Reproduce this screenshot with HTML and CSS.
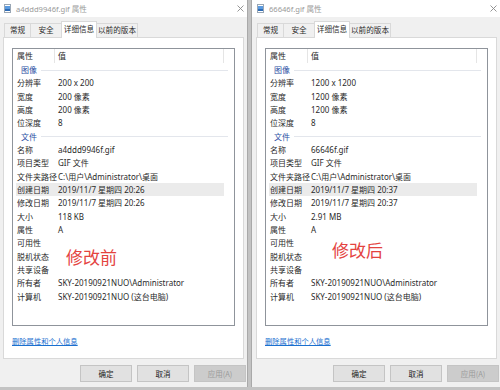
FILE: index.html
```html
<!DOCTYPE html>
<html lang="zh-CN">
<head>
<meta charset="utf-8">
<title>属性</title>
<link rel="stylesheet" href="styles.css">
</head>
<body>
<div class="screen">
  <div class="dialog">
    <div class="titlebar">
      <svg class="file-icon" width="7" height="9" viewBox="0 0 7 9"><rect x="0.5" y="0.5" width="6" height="8" fill="#fff" stroke="#9aa7b5"/><rect x="1" y="2" width="5" height="5" fill="#5b9be0"/><rect x="1" y="5" width="5" height="2" fill="#2d6bb5"/></svg>
      <span class="title">a4ddd9946f.gif 属性</span>
      <svg class="close" width="7" height="7" viewBox="0 0 7 7"><path d="M0.5 0.5L6.5 6.5M6.5 0.5L0.5 6.5" stroke="#8a8a8a" stroke-width="0.9"/></svg>
    </div>
    <div class="tabs">
      <div class="tab t1">常规</div>
      <div class="tab t2">安全</div>
      <div class="tab t3 active">详细信息</div>
      <div class="tab t4">以前的版本</div>
    </div>
    <div class="panel">
      <div class="listbox">
        <div class="lhead"><span class="c1">属性</span><span class="c2">值</span><span class="c3"></span></div>
        <div class="group"><span>图像</span><i></i></div>
        <div class="row"><span class="k">分辨率</span><span class="v">200 x 200</span></div>
        <div class="row"><span class="k">宽度</span><span class="v">200 像素</span></div>
        <div class="row"><span class="k">高度</span><span class="v">200 像素</span></div>
        <div class="row"><span class="k">位深度</span><span class="v">8</span></div>
        <div class="group"><span>文件</span><i></i></div>
        <div class="row"><span class="k">名称</span><span class="v">a4ddd9946f.gif</span></div>
        <div class="row"><span class="k">项目类型</span><span class="v">GIF 文件</span></div>
        <div class="row"><span class="k">文件夹路径</span><span class="v">C:\用户\Administrator\桌面</span></div>
        <div class="row hl"><span class="k">创建日期</span><span class="v">2019/11/7 星期四 20:26</span></div>
        <div class="row"><span class="k">修改日期</span><span class="v">2019/11/7 星期四 20:26</span></div>
        <div class="row"><span class="k">大小</span><span class="v">118 KB</span></div>
        <div class="row"><span class="k">属性</span><span class="v">A</span></div>
        <div class="row"><span class="k">可用性</span><span class="v"></span></div>
        <div class="row"><span class="k">脱机状态</span><span class="v"></span></div>
        <div class="row"><span class="k">共享设备</span><span class="v"></span></div>
        <div class="row"><span class="k">所有者</span><span class="v">SKY-20190921NUO\Administrator</span></div>
        <div class="row"><span class="k">计算机</span><span class="v">SKY-20190921NUO (这台电脑)</span></div>
        <div class="stamp stamp-before">修改前</div>
      </div>
      <a class="link" href="#">删除属性和个人信息</a>
    </div>
    <div class="buttons">
      <button class="btn">确定</button>
      <button class="btn">取消</button>
      <button class="btn" disabled>应用(A)</button>
    </div>
  </div>

  <div class="dialog">
    <div class="titlebar">
      <svg class="file-icon" width="7" height="9" viewBox="0 0 7 9"><rect x="0.5" y="0.5" width="6" height="8" fill="#fff" stroke="#9aa7b5"/><rect x="1" y="2" width="5" height="5" fill="#5b9be0"/><rect x="1" y="5" width="5" height="2" fill="#2d6bb5"/></svg>
      <span class="title">66646f.gif 属性</span>
      <svg class="close" width="7" height="7" viewBox="0 0 7 7"><path d="M0.5 0.5L6.5 6.5M6.5 0.5L0.5 6.5" stroke="#8a8a8a" stroke-width="0.9"/></svg>
    </div>
    <div class="tabs">
      <div class="tab t1">常规</div>
      <div class="tab t2">安全</div>
      <div class="tab t3 active">详细信息</div>
      <div class="tab t4">以前的版本</div>
    </div>
    <div class="panel">
      <div class="listbox">
        <div class="lhead"><span class="c1">属性</span><span class="c2">值</span><span class="c3"></span></div>
        <div class="group"><span>图像</span><i></i></div>
        <div class="row"><span class="k">分辨率</span><span class="v">1200 x 1200</span></div>
        <div class="row"><span class="k">宽度</span><span class="v">1200 像素</span></div>
        <div class="row"><span class="k">高度</span><span class="v">1200 像素</span></div>
        <div class="row"><span class="k">位深度</span><span class="v">8</span></div>
        <div class="group"><span>文件</span><i></i></div>
        <div class="row"><span class="k">名称</span><span class="v">66646f.gif</span></div>
        <div class="row"><span class="k">项目类型</span><span class="v">GIF 文件</span></div>
        <div class="row"><span class="k">文件夹路径</span><span class="v">C:\用户\Administrator\桌面</span></div>
        <div class="row hl"><span class="k">创建日期</span><span class="v">2019/11/7 星期四 20:37</span></div>
        <div class="row"><span class="k">修改日期</span><span class="v">2019/11/7 星期四 20:37</span></div>
        <div class="row"><span class="k">大小</span><span class="v">2.91 MB</span></div>
        <div class="row"><span class="k">属性</span><span class="v">A</span></div>
        <div class="row"><span class="k">可用性</span><span class="v"></span></div>
        <div class="row"><span class="k">脱机状态</span><span class="v"></span></div>
        <div class="row"><span class="k">共享设备</span><span class="v"></span></div>
        <div class="row"><span class="k">所有者</span><span class="v">SKY-20190921NUO\Administrator</span></div>
        <div class="row"><span class="k">计算机</span><span class="v">SKY-20190921NUO (这台电脑)</span></div>
        <div class="stamp stamp-after">修改后</div>
      </div>
      <a class="link" href="#">删除属性和个人信息</a>
    </div>
    <div class="buttons">
      <button class="btn">确定</button>
      <button class="btn">取消</button>
      <button class="btn" disabled>应用(A)</button>
    </div>
  </div>
</div>
</body>
</html>
```

FILE: styles.css
```css
html, body {
  margin: 0;
  padding: 0;
}
body {
  width: 500px;
  height: 390px;
  overflow: hidden;
  background: #c3c3c3;
  font-family: "Noto Sans", "Noto Sans CJK SC", sans-serif;
  color: #2a2a2a;
}
.screen {
  display: flex;
  gap: 3px;
  margin-left: -2px;
}
.dialog {
  flex: none;
  width: 250px;
  height: 387px;
  box-sizing: border-box;
  background: #f0f0f0;
  border-right: 1px solid #a9a9a9;
  border-left: 1px solid #a9a9a9;
  display: flex;
  flex-direction: column;
}
.titlebar {
  height: 17px;
  flex: none;
  background: #fff;
  display: flex;
  align-items: center;
  padding-left: 5px;
}
.file-icon {
  flex: none;
}
.title {
  margin-left: 5px;
  font-size: 7.6px;
  color: #9a9a9a;
  white-space: nowrap;
}
.close {
  margin-left: auto;
  margin-right: 3px;
  flex: none;
}
.tabs {
  height: 20px;
  flex: none;
  display: flex;
  align-items: flex-end;
  padding-left: 5px;
  position: relative;
  z-index: 1;
}
.tab {
  box-sizing: border-box;
  height: 14px;
  border: 1px solid #d9d9d9;
  border-bottom: none;
  background: #f0f0f0;
  font-size: 7.6px;
  line-height: 13px;
  text-align: center;
  white-space: nowrap;
}
.t1 { width: 27px; }
.t2 { width: 30px; border-left: none; border-right: none; }
.t3 { width: 36px; }
.t4 { width: 41px; border-left: none; }
.tab.active {
  height: 17px;
  background: #fff;
  margin-bottom: -1px;
  line-height: 15px;
}
.panel {
  box-sizing: border-box;
  height: 322px;
  margin: 0 3px 0 4px;
  background: #fff;
  border: 1px solid #d9d9d9;
  padding: 10px 0 0 8px;
  flex: none;
}
.listbox {
  position: relative;
  box-sizing: border-box;
  width: 223px;
  height: 278px;
  border: 1px solid #8f949b;
  font-size: 8px;
}
.lhead {
  display: flex;
  height: 14px;
  line-height: 14px;
}
.lhead span {
  box-sizing: border-box;
  display: block;
  height: 14px;
}
.c1 {
  width: 42px;
  padding-left: 4px;
  border-right: 1px solid #e5e5e5;
}
.c2 {
  width: 169px;
  padding-left: 3px;
  border-right: 1px solid #e5e5e5;
}
.c3 {
  flex: 1;
}
.group {
  height: 13.33px;
  display: flex;
  align-items: center;
  padding-left: 8px;
  color: #2a4ea3;
}
.group span {
  line-height: 13px;
}
.group i {
  flex: 1;
  height: 1px;
  background: #e3e6ec;
  margin: 1px 6px 0 4px;
}
.row {
  display: flex;
  width: 208px;
  margin-left: 3px;
  padding-left: 1px;
  box-sizing: border-box;
  height: 13.33px;
  line-height: 13.33px;
  white-space: nowrap;
}
.row.hl {
  background: #ebebeb;
}
.k {
  width: 41px;
  flex: none;
}
.v {
  flex: 1;
}
.stamp {
  position: absolute;
  font-size: 17px;
  line-height: 20px;
  color: #e4433f;
  font-family: "Noto Sans CJK SC", sans-serif;
}
.stamp-before {
  left: 53px;
  top: 198px;
}
.stamp-after {
  left: 66px;
  top: 191px;
}
.link {
  display: block;
  margin-top: 10px;
  font-size: 7.3px;
  line-height: 10px;
  color: #1a6fcf;
  text-decoration: underline;
  width: max-content;
}
.buttons {
  display: flex;
  justify-content: flex-end;
  gap: 5px;
  padding: 6px 1px 0 0;
}
.btn {
  box-sizing: border-box;
  width: 52px;
  height: 17px;
  margin: 0;
  padding: 0;
  background: #e1e1e1;
  border: 1px solid #c4c4c4;
  font-family: "Noto Sans CJK SC", sans-serif;
  font-size: 7.5px;
  color: #222;
}
.btn:disabled {
  background: #cccccc;
  border-color: #c4c4c4;
  color: #9a9a9a;
}
```
